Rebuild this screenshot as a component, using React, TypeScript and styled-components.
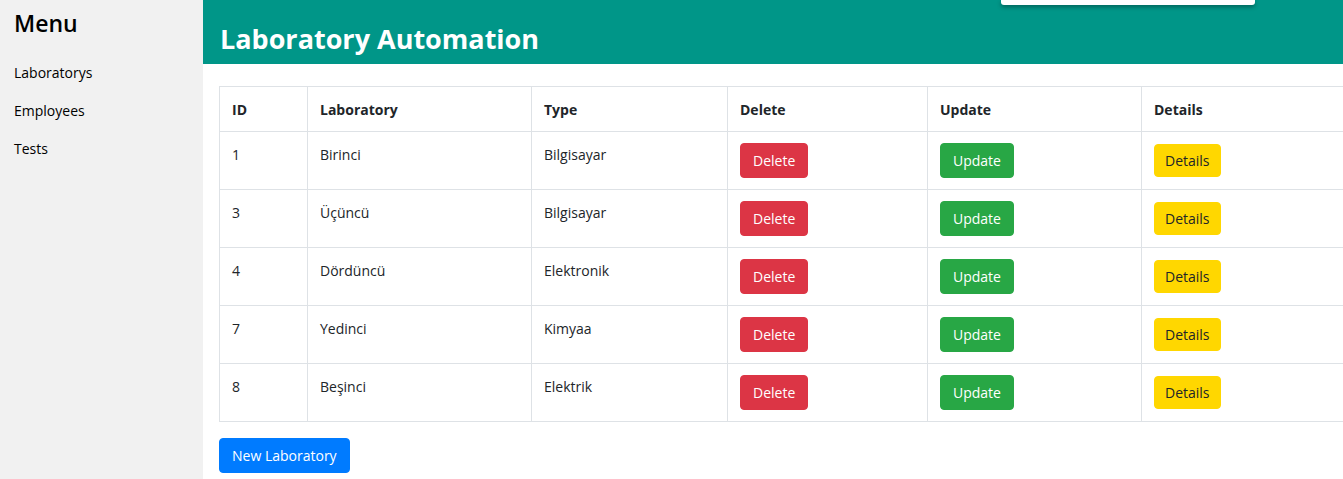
import React from 'react';
import styled, { createGlobalStyle } from 'styled-components';

const GlobalStyle = createGlobalStyle`
    html, body {
        margin: 0;
        padding: 0;
        height: 100%;
        overflow: hidden;
    }
    body {
        font-family: 'Open Sans', 'Noto Sans', sans-serif;
        color: #212529;
        background: #fff;
    }
`;

type Variant = 'danger' | 'success' | 'warning' | 'primary';

const colors: Record<Variant, { bg: string; fg: string }> = {
    danger: { bg: '#dc3545', fg: '#fff' },
    success: { bg: '#28a745', fg: '#fff' },
    warning: { bg: '#ffd700', fg: '#212529' },
    primary: { bg: '#007bff', fg: '#fff' }
};

const laboratories = [
    { id: 1, name: 'Birinci', type: 'Bilgisayar' },
    { id: 3, name: 'Üçüncü', type: 'Bilgisayar' },
    { id: 4, name: 'Dördüncü', type: 'Elektronik' },
    { id: 7, name: 'Yedinci', type: 'Kimyaa' },
    { id: 8, name: 'Beşinci', type: 'Elektrik' }
];

export default function App() {
    return (
        <>
            <GlobalStyle />
            <Layout>
                <Sidebar>
                    <MenuTitle>Menu</MenuTitle>
                    <MenuLink>Laboratorys</MenuLink>
                    <MenuLink>Employees</MenuLink>
                    <MenuLink>Tests</MenuLink>
                </Sidebar>
                <Main>
                    <Header>
                        <Title>Laboratory Automation</Title>
                        <Popup />
                    </Header>
                    <Content>
                        <Table>
                            <colgroup>
                                <col style={{ width: 88 }} />
                                <col style={{ width: 224 }} />
                                <col style={{ width: 196 }} />
                                <col style={{ width: 200 }} />
                                <col style={{ width: 214 }} />
                                <col style={{ width: 214 }} />
                            </colgroup>
                            <thead>
                                <tr>
                                    <Th>ID</Th>
                                    <Th>Laboratory</Th>
                                    <Th>Type</Th>
                                    <Th>Delete</Th>
                                    <Th>Update</Th>
                                    <Th>Details</Th>
                                </tr>
                            </thead>
                            <tbody>
                                {laboratories.map(lab => (
                                    <tr key={lab.id}>
                                        <Td>{lab.id}</Td>
                                        <Td>{lab.name}</Td>
                                        <Td>{lab.type}</Td>
                                        <Td>
                                            <Button variant="danger">Delete</Button>
                                        </Td>
                                        <Td>
                                            <Button variant="success">Update</Button>
                                        </Td>
                                        <Td>
                                            <Button variant="warning" $compact>
                                                Details
                                            </Button>
                                        </Td>
                                    </tr>
                                ))}
                            </tbody>
                        </Table>
                        <Button variant="primary">New Laboratory</Button>
                    </Content>
                </Main>
            </Layout>
        </>
    );
}

const Layout = styled.div`
    display: flex;
    min-height: 479px;
`;

const Sidebar = styled.nav`
    flex: 0 0 203px;
    background: #f1f1f1;
    padding: 6px 14px 0;
    box-sizing: border-box;
    display: flex;
    flex-direction: column;
`;

const MenuTitle = styled.h2`
    margin: 0 0 14px;
    font-size: 23px;
    font-weight: 600;
    line-height: 34px;
    color: #000;
`;

const MenuLink = styled.a`
    font-size: 14px;
    line-height: 24px;
    padding: 7px 0;
    color: #000;
    text-decoration: none;
`;

const Main = styled.main`
    flex: 1;
    min-width: 0;
    display: flex;
    flex-direction: column;
`;

const Header = styled.header`
    position: relative;
    height: 64px;
    background: #009688;
    display: flex;
    align-items: flex-end;
    padding: 0 17px;
`;

const Title = styled.h1`
    margin: 0 0 5px;
    color: #fff;
    font-size: 27px;
    font-weight: 700;
    line-height: 40px;
`;

const Popup = styled.div`
    position: absolute;
    top: 0;
    left: 798px;
    width: 254px;
    height: 5px;
    background: #fff;
    border-radius: 0 0 3px 3px;
    box-shadow: 0 2px 4px rgba(0, 0, 0, 0.35);
`;

const Content = styled.section`
    padding: 22px 16px 0;
`;

const Table = styled.table`
    border-collapse: collapse;
    table-layout: fixed;
    width: 1136px;
    margin-bottom: 16px;
`;

const Th = styled.th`
    text-align: left;
    font-size: 14px;
    font-weight: 700;
    line-height: 20px;
    padding: 13px 12px 11px;
    border: 1px solid #dee2e6;
`;

const Td = styled.td`
    vertical-align: top;
    font-size: 14px;
    line-height: 24px;
    padding: 11px 12px 11px;
    border: 1px solid #dee2e6;
`;

const Button = styled.button<{ variant: Variant; $compact?: boolean }>`
    font-family: 'Open Sans', 'Noto Sans', sans-serif;
    font-size: 14px;
    line-height: 21px;
    padding: ${p => (p.$compact ? '5px 10px' : '6px 12px')};
    margin-top: ${p => (p.$compact ? '1px' : '0')};
    border: 1px solid ${p => colors[p.variant].bg};
    border-radius: 4px;
    background: ${p => colors[p.variant].bg};
    color: ${p => colors[p.variant].fg};
    cursor: pointer;
    display: inline-block;
`;
